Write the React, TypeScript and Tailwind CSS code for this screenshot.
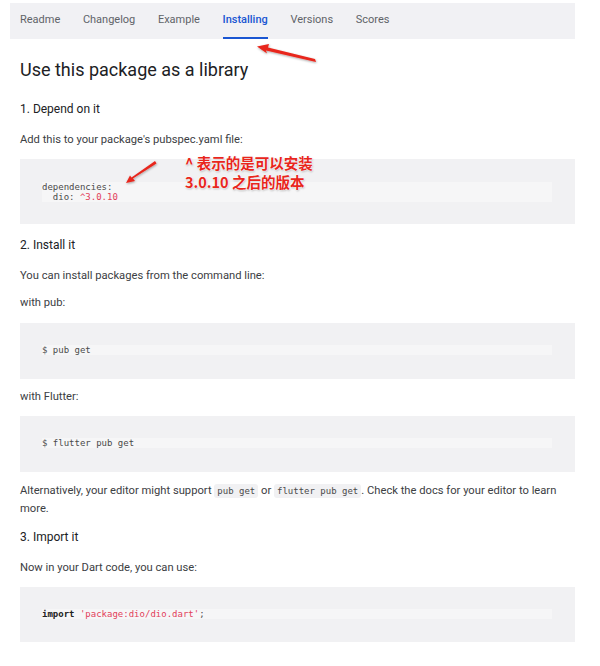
import React from "react";

const body = { fontFamily: "Roboto, 'Noto Sans', Arial, sans-serif" };
const mono = { fontFamily: "'DejaVu Sans Mono', 'Liberation Mono', monospace" };

function CodeBlock({ children, pt, pb }: { children: React.ReactNode; pt: string; pb: string }) {
  return (
    <div className={`bg-[#f1f1f3] pl-[22px] pr-[23px] ${pt} ${pb}`}>
      <div className="bg-[#f6f6f7] text-[9px] leading-[10px] text-[#4a4a4a] whitespace-pre" style={mono}>
        {children}
      </div>
    </div>
  );
}

export default function App() {
  const tabs = ["Readme", "Changelog", "Example", "Installing", "Versions", "Scores"];
  return (
    <div className="relative w-[600px] h-[666px] bg-white pt-[3px] overflow-hidden" style={body}>
      {/* Tab bar */}
      <div className="ml-[10px] mr-[25px] h-[36px] bg-[#f1f1f4] flex pl-[10px] gap-[22.6px]">
        {tabs.map((t) => (
          <div
            key={t}
            className={`flex items-center text-[11px] border-b-2 ${
              t === "Installing" ? "text-[#1a56d2] border-[#1a56d2] font-medium" : "text-[#5f6368] border-transparent"
            }`}
          >
            {t}
          </div>
        ))}
      </div>

      <div className="pl-[20px] pr-[25px] text-[#3c4043]">
        <h1 className="mt-[19px] text-[18px] leading-[24px] text-[#202124] font-normal">Use this package as a library</h1>

        <h2 className="mt-[18px] text-[12px] leading-[18px] text-[#202124]">1. Depend on it</h2>
        <p className="mt-[14px] text-[11.2px] leading-[16px]">Add this to your package's pubspec.yaml file:</p>
        <div className="mt-[11px]">
          <CodeBlock pt="pt-[23px]" pb="pb-[22px]">
            {"dependencies:\n  dio: "}
            <span className="text-[#e2405a]">^3.0.10</span>
          </CodeBlock>
        </div>

        <h2 className="mt-[12px] text-[12px] leading-[18px] text-[#202124]">2. Install it</h2>
        <p className="mt-[14px] text-[11.2px] leading-[16px]">You can install packages from the command line:</p>
        <p className="mt-[11px] text-[11.2px] leading-[16px]">with pub:</p>
        <div className="mt-[12px]">
          <CodeBlock pt="pt-[22px]" pb="pb-[24px]">{"$ pub get"}</CodeBlock>
        </div>

        <p className="mt-[10px] text-[11.2px] leading-[16px]">with Flutter:</p>
        <div className="mt-[11px]">
          <CodeBlock pt="pt-[22px]" pb="pb-[24px]">{"$ flutter pub get"}</CodeBlock>
        </div>

        <p className="mt-[10px] text-[11.2px] leading-[17px] pr-[2px]">
          Alternatively, your editor might support{" "}
          <code className="bg-[#f1f1f3] rounded-[3px] px-[3px] py-[2px] text-[9px] text-[#4a4a4a]" style={mono}>
            pub get
          </code>{" "}
          or{" "}
          <code className="bg-[#f1f1f3] rounded-[3px] px-[3px] py-[2px] text-[9px] text-[#4a4a4a]" style={mono}>
            flutter pub get
          </code>
          . Check the docs for your editor to learn more.
        </p>

        <h2 className="mt-[11px] text-[12px] leading-[18px] text-[#202124]">3. Import it</h2>
        <p className="mt-[14px] text-[11.2px] leading-[16px]">Now in your Dart code, you can use:</p>
        <div className="mt-[11px]">
          <CodeBlock pt="pt-[22px]" pb="pb-[23px]">
            <span className="font-bold text-[#222]">import</span> <span className="text-[#e2405a]">'package:dio/dio.dart'</span>;
          </CodeBlock>
        </div>
      </div>

      {/* Annotations */}
      <svg className="absolute left-0 top-0 pointer-events-none" width="600" height="666">
        <defs>
          <filter id="sh" x="-20%" y="-20%" width="140%" height="140%">
            <feDropShadow dx="0.5" dy="1" stdDeviation="0.8" floodColor="#000" floodOpacity="0.35" />
          </filter>
        </defs>
        <g filter="url(#sh)" fill="#e8261c">
          <polygon points="315,59 316,62 266,50.5 267,53.5 257,46.5 269,44 268,47.5" />
          <polygon points="155,161 156.5,163.5 133,178.5 135,181 126,183 130,175.5 131.5,177.5" />
        </g>
      </svg>
      <div
        className="absolute left-[185px] top-[153px] text-[14.5px] leading-[19px] font-bold text-[#e8261c] whitespace-pre [text-shadow:0_0_1.5px_#fff,0_0_1.5px_#fff,0_0_2px_#fff,0.5px_1px_2px_rgba(0,0,0,0.35)]"
        style={{ fontFamily: "'Noto Sans CJK SC', 'Noto Sans', sans-serif" }}
      >
        {"^ 表示的是可以安装\n3.0.10 之后的版本"}
      </div>
    </div>
  );
}
